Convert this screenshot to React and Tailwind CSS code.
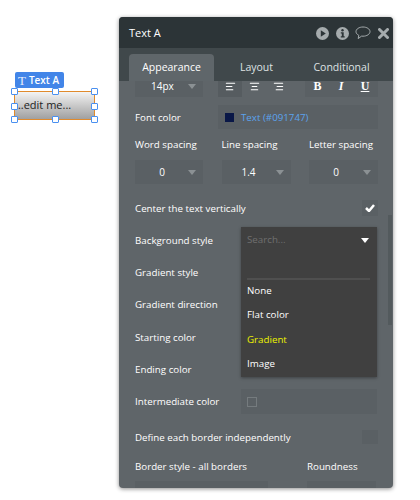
import React from 'react'
import { AlignLeft, AlignCenter, AlignRight } from 'lucide-react'

const Caret = ({ color = '#8b9194' }) => (
  <svg width="8" height="5" viewBox="0 0 8 5"><path d="M0 0h8L4 5z" fill={color} /></svg>
)

const Handle = ({ className }) => (
  <span className={`absolute w-[7px] h-[7px] bg-white border border-[#4a90f0] rounded-[1px] ${className}`}></span>
)

const Select = ({ value, className }) => (
  <div className={`h-6 bg-[#5a6064] flex items-center justify-between pl-[4px] pr-[7px] text-[10px] text-white ${className}`}>
    <span className="w-[46px] text-center">{value}</span>
    <Caret />
  </div>
)

const Row = ({ label, className = '', children }) => (
  <div className={`flex items-center justify-between text-[9.75px] font-medium text-white ${className}`}>
    <span className="pt-[2px]">{label}</span>
    {children}
  </div>
)

const App = () => {
  return (
    <div className="w-[420px] h-[500px] bg-white overflow-hidden flex font-['Open_Sans',sans-serif]">
      {/* element on the canvas */}
      <div className="w-[119px] shrink-0 pl-[14px] pt-[72px]">
        <div className="ml-[1px] w-[49px] h-[16px] bg-[#4285e8] rounded-[2px] flex items-center gap-[3px] pl-[3px] text-[10px] font-semibold text-white">
          <span className="font-['Liberation_Serif',serif] font-normal text-[13px] leading-none text-[#e8eefc]">T</span>
          <span>Text A</span>
        </div>
        <div className="relative mt-[3px] w-[81px] h-[29px] border border-[#e08a2c] bg-gradient-to-b from-[#f4f4f4] to-[#a0a0a0] flex items-center text-[11px] text-[#222]">
          <span>...edit me...</span>
          <Handle className="-left-[4px] -top-[4px]" />
          <Handle className="left-[37px] -top-[4px]" />
          <Handle className="-right-[4px] -top-[4px]" />
          <Handle className="-left-[4px] top-[11px]" />
          <Handle className="-right-[4px] top-[11px]" />
          <Handle className="-left-[4px] -bottom-[4px]" />
          <Handle className="left-[37px] -bottom-[4px]" />
          <Handle className="-right-[4px] -bottom-[4px]" />
        </div>
      </div>

      {/* property editor */}
      <div className="relative mt-[17px] w-[274px] h-[471px] rounded-[4px] overflow-hidden bg-[#5f6569] shadow-[0_1px_4px_rgba(0,0,0,0.45)] self-start">
        <div className="h-[31px] bg-[#2c3437] flex items-center justify-between pl-[10px] pr-[4px] pt-[1px] text-[11px] text-white">
          <span>Text A</span>
          <div className="flex items-center">
            <svg width="13" height="13" viewBox="0 0 13 13"><circle cx="6.5" cy="6.5" r="6.5" fill="#a5abad" /><path d="M4.8 3.3v6.4l5-3.2z" fill="#2c3437" /></svg>
            <svg width="13" height="13" viewBox="0 0 13 13" className="ml-[7px]"><circle cx="6.5" cy="6.5" r="6.5" fill="#a5abad" /><circle cx="6.5" cy="3.3" r="1.2" fill="#2c3437" /><path d="M4.8 5.3h2.9v4h1v1.2H4.8V9.3h1v-2.8h-1z" fill="#2c3437" /></svg>
            <svg width="16" height="14" viewBox="0 0 16 14" className="ml-[6px]"><path d="M8 1C4.2 1 1 3 1 5.6c0 1.6 1.1 2.9 2.8 3.7L3.2 12.6l3.4-2.5c.5.1.9.1 1.4.1 3.8 0 7-2 7-4.6S11.8 1 8 1z" fill="none" stroke="#a5abad" strokeWidth="1" /></svg>
            <svg width="11" height="11" viewBox="0 0 11 11" className="ml-[7px]"><path d="M1.5 1.5l8 8M9.5 1.5l-8 8" stroke="#a5abad" strokeWidth="3" strokeLinecap="round" /></svg>
          </div>
        </div>
        <div className="h-[33px] bg-[#40484b] flex items-end pl-[10px] text-[10.5px] text-[#dfe2e3]">
          <div className="w-[85px] h-[27px] bg-[#5f666a] rounded-t-[4px] flex items-center justify-center text-white">Appearance</div>
          <div className="w-[85px] h-[27px] flex items-center justify-center">Layout</div>
          <div className="w-[85px] h-[27px] flex items-center justify-center">Conditional</div>
        </div>

        <div className="pl-[16px] pr-[15px]">
          <div className="flex h-[16px]">
            <div className="w-[68px] bg-[#5a6064] flex items-center justify-between pl-[16px] pr-[7px] pb-[6px] text-[10px] text-white">
              <span>14px</span>
              <Caret />
            </div>
            <div className="ml-[15px] w-[72px] flex text-white">
              <div className="w-[24px] bg-[#565c60] flex items-center justify-center pb-[6px]"><AlignLeft size={11} strokeWidth={2.5} /></div>
              <div className="w-[24px] flex items-center justify-center pb-[6px]"><AlignCenter size={11} strokeWidth={2.5} /></div>
              <div className="w-[24px] flex items-center justify-center pb-[6px]"><AlignRight size={11} strokeWidth={2.5} /></div>
            </div>
            <div className="ml-[15px] w-[73px] bg-[#5a6064] flex items-center justify-around pb-[6px] font-['Liberation_Serif',serif] text-[12px] text-white">
              <span className="font-bold">B</span>
              <span className="italic font-bold">I</span>
              <span className="underline font-bold">U</span>
            </div>
          </div>

          <Row label="Font color" className="mt-[8px] h-[24px]">
            <div className="w-[160px] h-[24px] bg-[#5a6064] flex items-center pl-[7px] gap-[7px]">
              <span className="w-[9px] h-[9px] bg-[#091747]"></span>
              <span className="pt-[2px] text-[#5aa3ee]">Text (#091747)</span>
            </div>
          </Row>

          <div className="mt-[6px] pt-[2px] flex justify-between text-[9.75px] font-medium text-white h-[18px] items-center">
            <span className="w-[68px] whitespace-nowrap">Word spacing</span>
            <span className="w-[69px] whitespace-nowrap">Line spacing</span>
            <span className="w-[69px] whitespace-nowrap">Letter spacing</span>
          </div>
          <div className="mt-[7px] flex justify-between">
            <Select value="0" className="w-[68px]" />
            <Select value="1.4" className="w-[69px]" />
            <Select value="0" className="w-[69px]" />
          </div>

          <Row label="Center the text vertically" className="mt-[16px] h-[16px]">
            <div className="w-[16px] h-[16px] bg-[#5a6064] flex items-center justify-center">
              <svg width="10" height="8" viewBox="0 0 10 8"><path d="M1 4l3 3 5-6" fill="none" stroke="#fff" strokeWidth="2.5" /></svg>
            </div>
          </Row>

          <Row label="Background style" className="mt-[15px] h-[18px]"></Row>
          <Row label="Gradient style" className="mt-[14px] h-[18px]"></Row>
          <Row label="Gradient direction" className="mt-[14px] h-[18px]"></Row>
          <Row label="Starting color" className="mt-[15px] h-[18px]"></Row>
          <Row label="Ending color" className="mt-[14px] h-[18px]"></Row>

          <Row label="Intermediate color" className="mt-[11px] h-[25px]">
            <div className="w-[136px] h-[25px] bg-[#5a6064] flex items-center pl-[6px] mr-[1px]">
              <span className="w-[10px] h-[10px] border border-[#757b7e]"></span>
            </div>
          </Row>

          <Row label="Define each border independently" className="mt-[16px] h-[14px]">
            <div className="w-[16px] h-[14px] bg-[#5a6064]"></div>
          </Row>

          <div className="mt-[14px] pt-[2px] flex text-[9.75px] font-medium text-white h-[16px] items-center">
            <span className="w-[172px]">Border style - all borders</span>
            <span>Roundness</span>
          </div>
          <div className="mt-[7px] flex">
            <div className="w-[133px] h-[20px] bg-[#5a6064]"></div>
            <div className="ml-[39px] w-[69px] h-[20px] bg-[#5a6064]"></div>
          </div>
        </div>

        {/* open dropdown */}
        <div className="absolute left-[122px] top-[210px] w-[136px] h-[150px] bg-[#404040] shadow-[0_1px_3px_rgba(0,0,0,0.35)] pl-[6px] pr-[6px] text-[9.75px] font-medium text-white">
          <div className="h-[25px] pt-[2px] flex items-center justify-between pr-[2px] text-[#6f6f6f]">
            <span>Search...</span>
            <Caret color="#ffffff" />
          </div>
          <div className="mt-[26px] border-t-2 border-[#4f4f4f] mr-[1px]"></div>
          <div className="-mt-[1px] h-[24px] flex items-center">None</div>
          <div className="h-[24px] flex items-center">Flat color</div>
          <div className="mt-[1px] h-[24px] flex items-center text-[#eef200]">Gradient</div>
          <div className="h-[24px] flex items-center">Image</div>
        </div>

        {/* scrollbar */}
        <div className="absolute right-[1px] top-[198px] w-[4px] h-[110px] bg-[#535a5d]"></div>
      </div>
    </div>
  )
}

export default App
